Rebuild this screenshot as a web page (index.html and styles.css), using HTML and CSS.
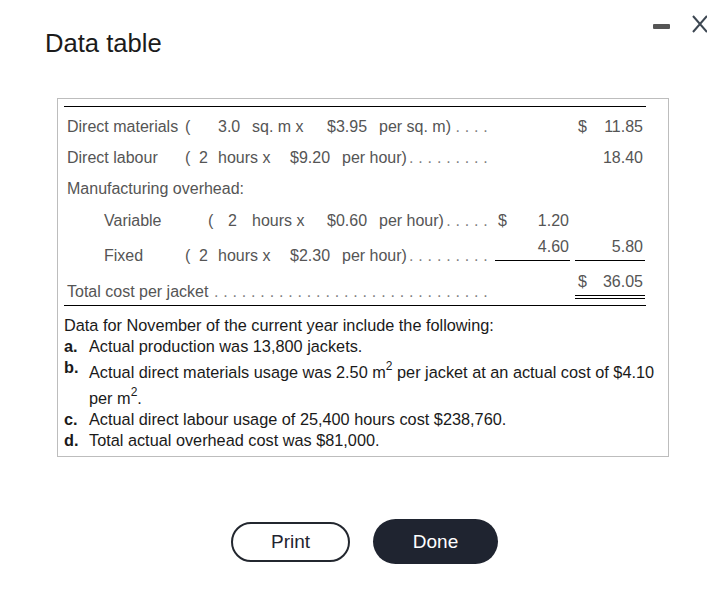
FILE: index.html
```html
<!DOCTYPE html>
<html lang="en">
<head>
<meta charset="utf-8">
<title>Data table</title>
<link rel="stylesheet" href="styles.css">
</head>
<body>
<div class="dialog">
  <header class="head">
    <h1 class="title">Data table</h1>
    <svg class="controls" width="60" height="40" viewBox="0 0 60 40" aria-hidden="true">
      <rect x="6" y="24" width="17" height="5" rx="1" fill="#555"/>
      <path d="M46 16 L60 32 M60 16 L46 32" stroke="#3d4752" stroke-width="2" fill="none"/>
    </svg>
  </header>

  <section class="box">
    <div class="costs">
      <div class="row">
        <div class="lbl l1"><span>Direct materials</span><span>(</span><span>3.0</span><span>sq. m x</span><span>$3.95</span><span>per sq. m)</span><span class="lead">. . . .</span></div>
        <div class="amt a"></div>
        <div class="amt b"><span>$</span><span class="v">11.85</span></div>
      </div>
      <div class="row">
        <div class="lbl l2"><span>Direct labour</span><span>(</span><span>2</span><span>hours x</span><span>$9.20</span><span>per hour)</span><span class="lead">. . . . . . . . .</span></div>
        <div class="amt a"></div>
        <div class="amt b"><span class="v">18.40</span></div>
      </div>
      <div class="row">
        <div class="lbl l3"><span>Manufacturing overhead:</span></div>
      </div>
      <div class="row r-var">
        <div class="lbl l4"><span>Variable</span><span>(</span><span>2</span><span>hours x</span><span>$0.60</span><span>per hour)</span><span class="lead">. . . . .</span></div>
        <div class="amt a"><span>$</span><span class="v">1.20</span></div>
        <div class="amt b"></div>
      </div>
      <div class="row r-fixed">
        <div class="lbl l5"><span>Fixed</span><span>(</span><span>2</span><span>hours x</span><span>$2.30</span><span>per hour)</span><span class="lead">. . . . . . . . .</span></div>
        <div class="amt a sub"><span class="v">4.60</span></div>
        <div class="amt b sub"><span class="v">5.80</span></div>
      </div>
      <div class="row r-total">
        <div class="lbl l6"><span>Total cost per jacket</span><span class="lead">. . . . . . . . . . . . . . . . . . . . . . . . . . . . . .</span></div>
        <div class="amt a"></div>
        <div class="amt b grand"><span>$</span><span class="v">36.05</span></div>
      </div>
    </div>

    <div class="notes">
      <p class="intro">Data for November of the current year include the following:</p>
      <ol class="facts">
        <li><b>a.</b><span>Actual production was 13,800 jackets.</span></li>
        <li><b>b.</b><span>Actual direct materials usage was 2.50 m<sup>2</sup> per jacket at an actual cost of $4.10 per m<sup>2</sup>.</span></li>
        <li><b>c.</b><span>Actual direct labour usage of 25,400 hours cost $238,760.</span></li>
        <li><b>d.</b><span>Total actual overhead cost was $81,000.</span></li>
      </ol>
    </div>
  </section>

  <div class="actions">
    <button class="btn print" type="button">Print</button>
    <button class="btn done" type="button">Done</button>
  </div>
</div>
</body>
</html>
```

FILE: styles.css
```css
html, body {
  margin: 0;
  padding: 0;
  background: #fff;
}

body {
  width: 707px;
  height: 597px;
  overflow: hidden;
  font-family: "Liberation Sans", Arial, sans-serif;
  color: #1a1a1a;
}

.head {
  display: flex;
  justify-content: space-between;
  align-items: flex-start;
  height: 98px;
  padding-left: 45px;
  box-sizing: border-box;
}

.title {
  margin: 28px 0 0;
  font-size: 25.6px;
  line-height: 30px;
  font-weight: normal;
  color: #1b1b1b;
}

.controls {
  display: block;
  flex: none;
}

.box {
  margin-left: 57px;
  width: 612px;
  box-sizing: border-box;
  border: 1px solid #bdbdbd;
  padding: 7px 1px 5px 6px;
}

.costs {
  width: 582px;
  border-top: 1px solid #000;
  border-bottom: 1px solid #000;
  color: #555;
  font-size: 16px;
  line-height: 18px;
}

.row {
  display: flex;
  align-items: flex-start;
  height: 31px;
  --lp: 10.5px;
  --ap: 10.5px;
}

.row.r-var {
  height: 32px;
  --lp: 11.5px;
  --ap: 11.5px;
}

.row.r-fixed {
  height: 36px;
  --lp: 14.5px;
  --ap: 5.8px;
}

.row.r-total {
  height: 37px;
  --lp: 15px;
  --ap: 4.8px;
}

.lbl {
  width: 431px;
  flex: none;
  box-sizing: border-box;
  padding: var(--lp) 7px 0 3px;
  display: grid;
  white-space: nowrap;
}

.l1 { grid-template-columns: 118px 33px 34px 75px 52px max-content minmax(0, 1fr); }
.l2 { grid-template-columns: 118px 14px 19px 72px 52px max-content minmax(0, 1fr); }
.l3 { grid-template-columns: max-content; }
.l4 { padding-left: 40px; grid-template-columns: 104px 20px 24px 75px 52px max-content minmax(0, 1fr); }
.l5 { padding-left: 40px; grid-template-columns: 81px 14px 19px 72px 52px max-content minmax(0, 1fr); }
.l6 { grid-template-columns: max-content minmax(0, 1fr); }

.lead {
  text-align: right;
  color: #808080;
  letter-spacing: 0.2px;
}

.amt {
  flex: none;
  box-sizing: border-box;
  display: flex;
  white-space: nowrap;
  padding-top: var(--ap);
  min-height: 18px;
}

.amt .v {
  margin-left: auto;
}

.amt.a {
  width: 75px;
  padding-left: 3px;
  padding-right: 1px;
}

.amt.b {
  width: 70px;
  margin-left: 5px;
  padding-left: 3px;
  padding-right: 2px;
}

.amt.sub {
  padding-bottom: 4.2px;
  border-bottom: 1px solid #000;
}

.amt.grand {
  padding-bottom: 4.2px;
  border-bottom: 4px double #000;
}

.notes {
  margin-top: 9px;
  font-size: 16.3px;
  line-height: 21px;
  color: #1a1a1a;
}

.intro {
  margin: 0;
}

.facts {
  list-style: none;
  margin: 0;
  padding: 0;
}

.facts li {
  display: flex;
}

.facts b {
  flex: none;
  width: 25px;
}

.facts sup {
  font-size: 12px;
  vertical-align: 8px;
  line-height: 18px;
}

.actions {
  display: flex;
  justify-content: center;
  align-items: center;
  gap: 23px;
  margin: 62px 0 0 57px;
  width: 612px;
  padding-left: 3px;
  box-sizing: border-box;
}

.btn {
  font-family: "Liberation Sans", Arial, sans-serif;
  font-size: 19px;
  border-radius: 999px;
  box-sizing: border-box;
  padding: 0;
  cursor: pointer;
}

.print {
  width: 119px;
  height: 40px;
  border: 2px solid #23272f;
  background: #fff;
  color: #1f2430;
}

.done {
  width: 125px;
  height: 45px;
  border: 0;
  background: #1f2430;
  color: #fff;
}
```
